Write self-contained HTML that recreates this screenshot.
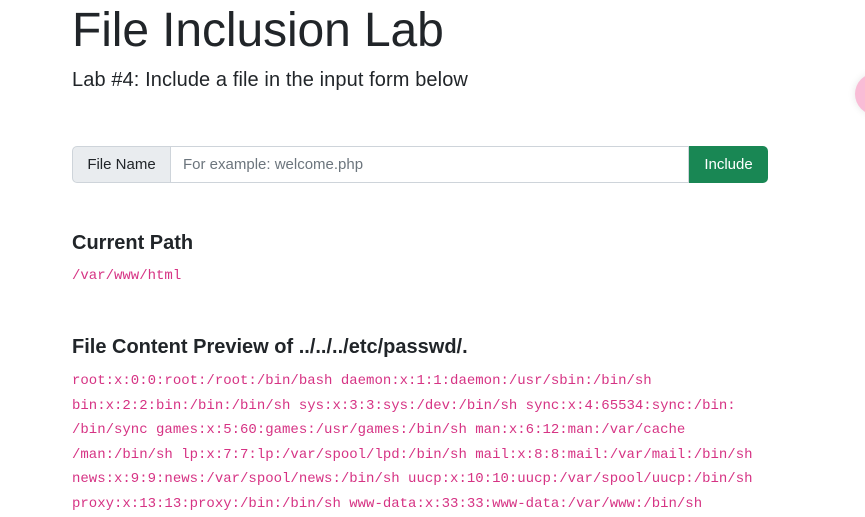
<!DOCTYPE html>
<html><head><style>
*{margin:0;padding:0;box-sizing:border-box}
body{width:865px;height:512px;overflow:hidden;background:#fff;font-family:"Liberation Sans",sans-serif;color:#212529;position:relative}
.t{position:absolute;left:72px;top:3px;font-size:48px;font-weight:300;letter-spacing:-0.1px}
.s{position:absolute;left:72px;top:69px;font-size:20px;font-weight:300;letter-spacing:0.1px}
.ig{position:absolute;left:72px;top:146px;width:696px;height:37px;display:flex}
.lb{width:99px;background:#e9ecef;border:1px solid #ced4da;border-radius:5px 0 0 5px;font-size:15px;display:flex;align-items:center;justify-content:center}
.in{flex:1;border:1px solid #ced4da;border-left:none;font-size:15px;color:#6c757d;display:flex;align-items:center;padding-left:12px}
.bt{width:79px;background:#198754;color:#fff;border-radius:0 5px 5px 0;font-size:15px;display:flex;align-items:center;justify-content:center}
h5{position:absolute;left:72px;font-size:20px;font-weight:bold}
code{position:absolute;left:72px;font-family:"Liberation Mono",monospace;font-size:14px;color:#d63384;line-height:24.6px;white-space:pre}
.c{position:absolute;left:855px;top:73px;width:42px;height:42px;border-radius:50%;background:#f9bcd6;box-shadow:0 0 8px rgba(0,0,0,.1)}
</style></head><body>
<div class="t">File Inclusion Lab</div>
<div class="s">Lab #4: Include a file in the input form below</div>
<div class="ig"><div class="lb">File Name</div><div class="in">For example: welcome.php</div><div class="bt">Include</div></div>
<h5 style="top:232px">Current Path</h5>
<code style="top:264px">/var/www/html</code>
<h5 style="top:336px">File Content Preview of ../../../etc/passwd/.</h5>
<code style="top:369px">root:x:0:0:root:/root:/bin/bash daemon:x:1:1:daemon:/usr/sbin:/bin/sh
bin:x:2:2:bin:/bin:/bin/sh sys:x:3:3:sys:/dev:/bin/sh sync:x:4:65534:sync:/bin:
/bin/sync games:x:5:60:games:/usr/games:/bin/sh man:x:6:12:man:/var/cache
/man:/bin/sh lp:x:7:7:lp:/var/spool/lpd:/bin/sh mail:x:8:8:mail:/var/mail:/bin/sh
news:x:9:9:news:/var/spool/news:/bin/sh uucp:x:10:10:uucp:/var/spool/uucp:/bin/sh
proxy:x:13:13:proxy:/bin:/bin/sh www-data:x:33:33:www-data:/var/www:/bin/sh</code>
<div class="c"></div>
</body></html>
